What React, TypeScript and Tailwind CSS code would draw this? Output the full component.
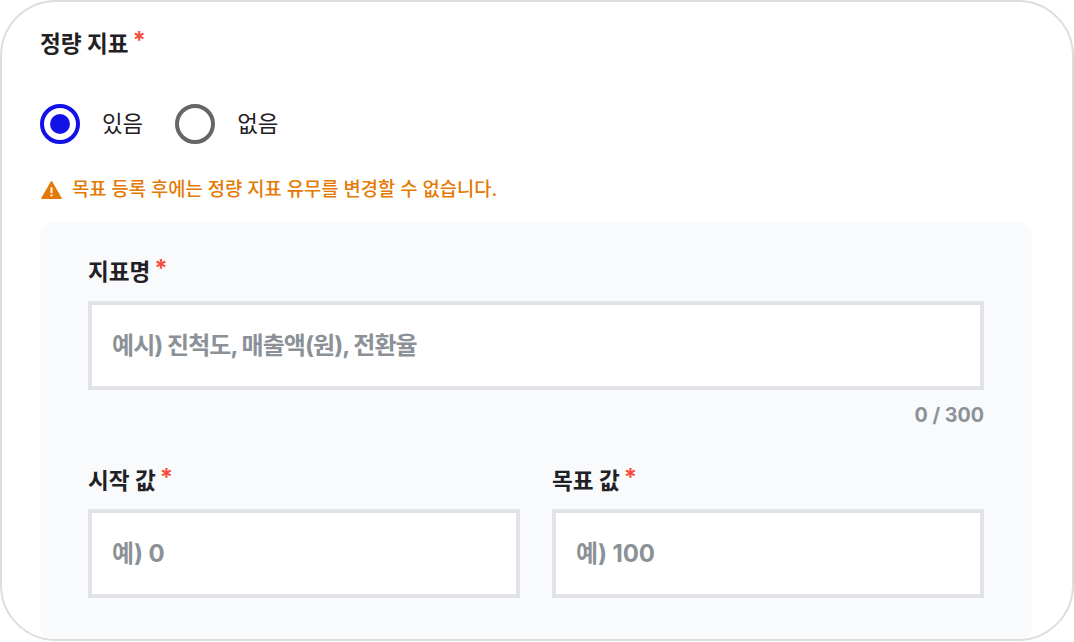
const font = "font-['Inter','Noto_Sans_CJK_KR',sans-serif]";

function Label({ text, className = "" }: { text: string; className?: string }) {
  return (
    <div className={`flex h-[28px] items-center text-[22.6px] font-bold leading-[28px] text-[#1f2124] ${className}`}>
      <span>{text}</span>
      <span className="ml-[4px] -translate-y-[3px] text-[24px] leading-[22px] text-[#f4503c]">*</span>
    </div>
  );
}

function Field({ placeholder, long }: { placeholder: string; long?: boolean }) {
  return (
    <input
      placeholder={placeholder}
      className={`block h-[89px] w-full border-[4px] border-[#e1e3e6] bg-white px-[20px] text-[24px] font-bold text-[#1f2124] outline-none placeholder:text-[#8b9197] ${
        long ? "tracking-[-0.95px]" : "tracking-[-0.1px]"
      }`}
    />
  );
}

function Radio({ label, checked }: { label: string; checked?: boolean }) {
  return (
    <label className="flex items-center gap-[22px]">
      <span
        className={`flex h-[40px] w-[40px] items-center justify-center rounded-full border-[4px] ${
          checked ? "border-[#1212e8]" : "border-[#666666]"
        }`}
      >
        {checked && <span className="h-[20px] w-[20px] rounded-full bg-[#1212e8]" />}
      </span>
      <span className="text-[22.4px] leading-[28px] text-[#1f2124]">{label}</span>
    </label>
  );
}

export default function App() {
  return (
    <div className={`h-[642px] w-[1074px] overflow-hidden bg-white ${font}`}>
      <div className="h-[641px] overflow-hidden rounded-[56px] border-2 border-[#dddddd] bg-white pl-[38px] pr-[40px] pt-[28px]">
        <Label text="정량 지표" />
        <div className="mt-[46px] flex gap-[32px]">
          <Radio label="있음" checked />
          <Radio label="없음" />
        </div>
        <div className="mt-[32px] flex h-[28px] items-center gap-[10px] text-[18.75px] font-medium text-[#e47a05]">
          <svg viewBox="0 0 24 22" className="ml-[1px] h-[20px] w-[21px]">
            <path d="M12 1.5 23 20.5H1Z" fill="#e47a05" stroke="#e47a05" strokeWidth="1.5" strokeLinejoin="round" />
            <rect x="10.9" y="8" width="2.2" height="6.5" fill="#ffffff" />
            <rect x="10.9" y="16" width="2.2" height="2.2" fill="#ffffff" />
          </svg>
          <span>목표 등록 후에는 정량 지표 유무를 변경할 수 없습니다.</span>
        </div>
        <div className="mt-[18px] h-[418px] rounded-[14px] bg-[#f8fafc] px-[48px] pt-[36px]">
          <Label text="지표명" />
          <div className="mt-[15px]">
            <Field placeholder="예시) 진척도, 매출액(원), 전환율" long />
          </div>
          <div className="mt-[13px] text-right text-[19.7px] font-bold leading-[24px] text-[#8b9197]">0 / 300</div>
          <div className="mt-[40px] grid grid-cols-2 gap-[32px]">
            <div>
              <Label text="시작 값" />
              <div className="mt-[14px]">
                <Field placeholder="예) 0" />
              </div>
            </div>
            <div>
              <Label text="목표 값" />
              <div className="mt-[14px]">
                <Field placeholder="예) 100" />
              </div>
            </div>
          </div>
        </div>
      </div>
    </div>
  );
}
